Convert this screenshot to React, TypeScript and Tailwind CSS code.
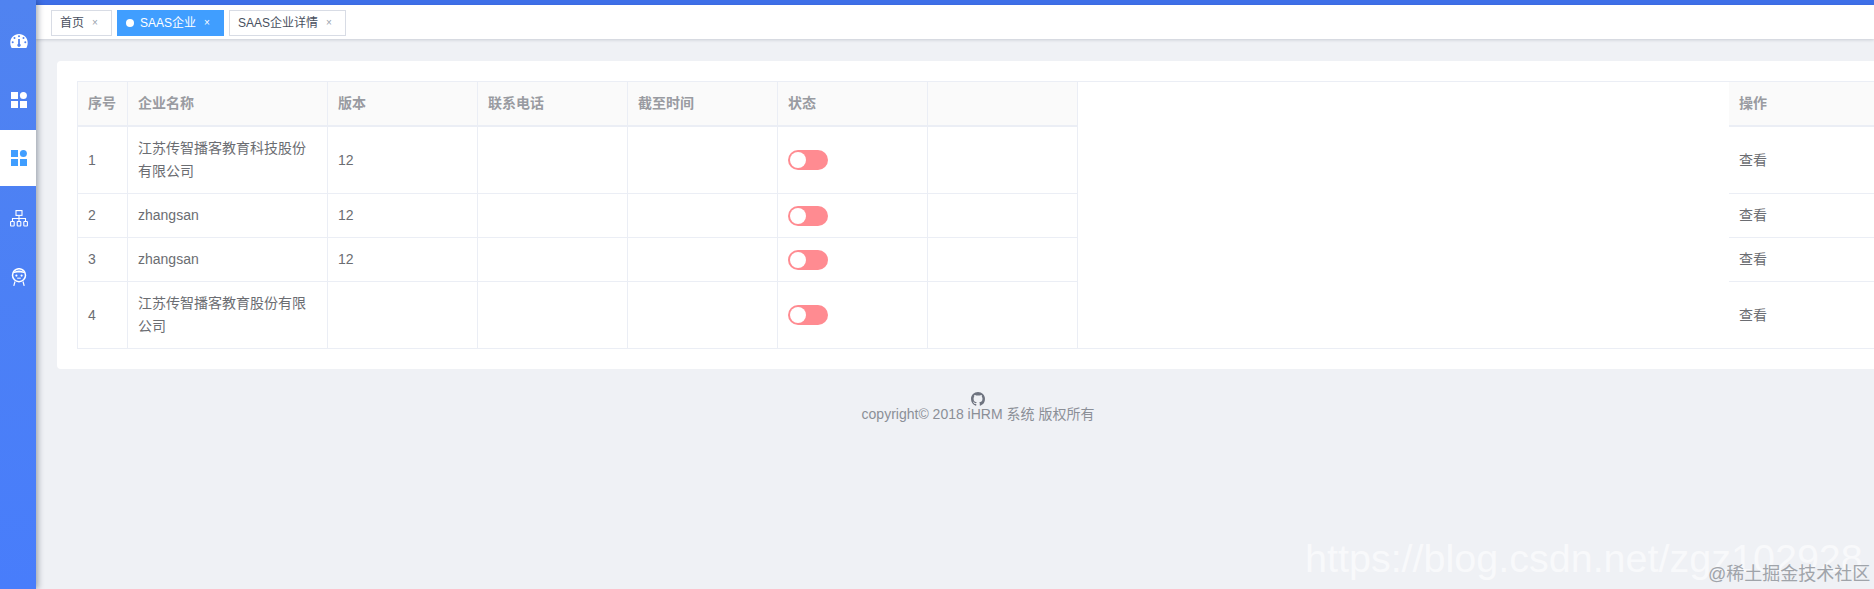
import React from 'react';

const cjk = { fontFamily: '"Liberation Sans", "Noto Sans CJK SC", sans-serif' };

const GaugeIcon = () => (
  <svg width="18" height="16" viewBox="0 0 18 15">
    <path
      fillRule="evenodd"
      fill="currentColor"
      d="M9 0.5C4.2 0.5 0.3 4.4 0.3 9.2c0 2 .5 3.700 1.300 5.300h14.800c.8-1.600 1.300-3.300 1.300-5.300C17.700 4.400 13.800 .5 9 .5zM9 1.800a1 1 0 1 1 0 2a1 1 0 1 1 0-2zM4.500 3.600a1 1 0 1 1 0 2a1 1 0 1 1 0-2zM13.500 3.600a1 1 0 1 1 0 2a1 1 0 1 1 0-2zM2.700 7.800a1 1 0 1 1 0 2a1 1 0 1 1 0-2zM15.300 7.800a1 1 0 1 1 0 2a1 1 0 1 1 0-2zM9.900 5.500L9.900 10.200a1.700 1.700 0 1 1-1.800 0L8.100 5.500z"
    />
  </svg>
);

const GridIcon = () => (
  <svg width="16" height="16" viewBox="0 0 16 16" fill="currentColor">
    <rect x="0" y="0" width="7" height="7" />
    <circle cx="12.400" cy="3.500" r="3.500" />
    <rect x="0" y="9" width="7" height="7" />
    <rect x="9" y="9" width="7" height="7" />
  </svg>
);

const TreeIcon = () => (
  <svg width="18" height="17" viewBox="0 0 18 17" fill="none" stroke="currentColor" strokeWidth="1.100">
    <rect x="6" y="0.600" width="6" height="4.800" />
    <path d="M9 5.400V8.500M2.500 11.500V8.500H15.500V11.500M9 8.500V11.500" />
    <rect x="0.600" y="11.500" width="3.600" height="4.500" rx="0.600" />
    <rect x="7.200" y="11.500" width="3.600" height="4.500" rx="0.600" />
    <rect x="13.800" y="11.500" width="3.600" height="4.500" rx="0.600" />
  </svg>
);

const RobotIcon = () => (
  <svg width="16" height="18" viewBox="0 0 16 18" fill="none" stroke="currentColor">
    <circle cx="8" cy="7.200" r="6.500" strokeWidth="1.500" />
    <path d="M2 5.500C3.500 1.500 12.500 1.500 14 5.500C11 4.300 5 4.300 2 5.500Z" fill="currentColor" stroke="none" />
    <circle cx="5.400" cy="7.600" r="1.100" fill="currentColor" stroke="none" />
    <circle cx="10.600" cy="7.600" r="1.100" fill="currentColor" stroke="none" />
    <path d="M6.200 10.200H9.800" strokeWidth="1" />
    <path d="M4 13.500L2.800 17.800M12 13.500L13.200 17.800" strokeWidth="1.200" />
  </svg>
);

const GithubIcon = () => (
  <svg width="14" height="14" viewBox="0 0 16 16" fill="currentColor">
    <path d="M8 0C3.580 0 0 3.580 0 8c0 3.540 2.290 6.530 5.470 7.590.4.070.55-.17.550-.38 0-.19-.01-.82-.01-1.490-2.010.37-2.530-.49-2.690-.94-.09-.23-.48-.94-.82-1.130-.28-.15-.68-.52-.01-.53.630-.01 1.080.58 1.230.82.720 1.210 1.870.87 2.330.66.070-.52.280-.87.510-1.070-1.780-.2-3.640-.89-3.640-3.950 0-.87.310-1.590.820-2.150-.08-.2-.36-1.020.08-2.120 0 0 .67-.21 2.200.82.640-.18 1.320-.27 2-.27s1.360.09 2 .27c1.530-1.040 2.200-.82 2.200-.82.440 1.100.160 1.920.080 2.120.510.560.820 1.270.820 2.150 0 3.070-1.870 3.750-3.650 3.950.290.250.540.730.540 1.480 0 1.070-.01 1.930-.01 2.200 0 .21.150.460.550.380A8.010 8.010 0 0 0 16 8c0-4.420-3.580-8-8-8z" />
  </svg>
);

const menu = [
  { key: 'dash', Icon: GaugeIcon, cls: '' },
  { key: 'apps', Icon: GridIcon, cls: '' },
  { key: 'saas', Icon: GridIcon, cls: 'bg-white text-[#409eff]' },
  { key: 'org', Icon: TreeIcon, cls: 'pt-[4px]' },
  { key: 'user', Icon: RobotIcon, cls: 'pt-[4px]' },
];

const rows = [
  { id: 1, name: '江苏传智播客教育科技股份有限公司', version: '12' },
  { id: 2, name: 'zhangsan', version: '12' },
  { id: 3, name: 'zhangsan', version: '12' },
  { id: 4, name: '江苏传智播客教育股份有限公司', version: '' },
];

const headers = ['序号', '企业名称', '版本', '联系电话', '截至时间', '状态', ''];

const thClass = 'h-[45px] bg-[#fafafa] border-r border-b-2 border-[#ebeef5] pl-[10px] text-left font-bold text-[#999ba1]';
const tdClass = 'border-r border-b border-[#ebeef5] py-[10px] pl-[10px] pr-[10px] align-middle';

const Switch = () => (
  <div className="relative h-[20px] w-[40px] rounded-full bg-[#ff8b91]">
    <div className="absolute left-[2px] top-[2px] h-[16px] w-[16px] rounded-full bg-white" />
  </div>
);

export default function App() {
  return (
    <div className="relative flex h-[589px] w-full overflow-hidden bg-[#eff1f5] text-[14px] leading-[23px] text-[#6b6d72]" style={cjk}>
      <aside className="z-20 flex w-[36px] shrink-0 flex-col bg-gradient-to-b from-[#5083f0] to-[#487dfb] pt-[13px] text-white shadow-[2px_0_6px_rgba(0,21,41,0.35)]">
        {menu.map(({ key, Icon, cls }) => (
          <div key={key} className={`mb-[2.600px] flex h-[56px] items-center justify-center pl-[2px] ${cls}`}>
            <Icon />
          </div>
        ))}
      </aside>

      <main className="flex min-w-0 flex-1 flex-col">
        <div className="h-[5px] shrink-0 bg-[#3e6fe8]" />
        <div className="z-10 flex h-[34px] shrink-0 items-start gap-[5px] bg-white pl-[15px] pt-[5px] text-[12px] leading-[24px] shadow-[0_1px_3px_rgba(0,21,41,0.16)]">
          <div className="flex h-[26px] w-[61px] items-center border border-[#d8dce5] pl-[8px] text-[#495060]">
            <span>首页</span>
            <span className="ml-[8px] text-[10px] text-[#9aa2ad]">×</span>
          </div>
          <div className="flex h-[26px] w-[107px] items-center bg-[#409eff] pl-[9px] text-white">
            <span className="mr-[6px] h-[8px] w-[8px] rounded-full bg-white" />
            <span>SAAS企业</span>
            <span className="ml-[8px] text-[10px]">×</span>
          </div>
          <div className="flex h-[26px] w-[117px] items-center border border-[#d8dce5] pl-[8px] text-[#495060]">
            <span>SAAS企业详情</span>
            <span className="ml-[8px] text-[10px] text-[#9aa2ad]">×</span>
          </div>
        </div>

        <div className="pl-[21px] pt-[22px]">
          <div className="w-[1842px] rounded-[4px] bg-white p-[20px]">
            <table className="w-[1802px] table-fixed border-separate border-spacing-0 border-l border-t border-[#ebeef5]">
              <colgroup>
                <col className="w-[50px]" />
                <col className="w-[200px]" />
                <col className="w-[150px]" />
                <col className="w-[150px]" />
                <col className="w-[150px]" />
                <col className="w-[150px]" />
                <col className="w-[150px]" />
                <col className="w-[651px]" />
                <col className="w-[150px]" />
              </colgroup>
              <thead>
                <tr>
                  {headers.map((h) => (
                    <th key={h} className={thClass}>{h}</th>
                  ))}
                  <th className="border-b-0" />
                  <th className="h-[45px] border-b-2 border-[#ebeef5] bg-[#fafafa] pl-[10px] text-left font-bold text-[#999ba1]">操作</th>
                </tr>
              </thead>
              <tbody>
                {rows.map((row, i) => (
                  <tr key={row.id}>
                    <td className={tdClass}>{row.id}</td>
                    <td className={tdClass}>{row.name}</td>
                    <td className={tdClass}>{row.version}</td>
                    <td className={tdClass} />
                    <td className={tdClass} />
                    <td className={tdClass}><Switch /></td>
                    <td className={tdClass} />
                    <td className={i === rows.length - 1 ? 'border-b border-[#ebeef5]' : ''} />
                    <td className="border-b border-[#ebeef5] py-[10px] pl-[10px] align-middle">查看</td>
                  </tr>
                ))}
              </tbody>
            </table>
          </div>

          <footer className="flex w-[1842px] flex-col items-center pt-[23px] text-[14px] leading-[16px] text-[#8b8f97]">
            <span className="text-[#6f7480]"><GithubIcon /></span>
            <span>copyright© 2018 iHRM 系统 版权所有</span>
          </footer>
        </div>
      </main>

      <div className="pointer-events-none absolute left-[1305px] top-[534px] z-30 whitespace-nowrap text-[39.500px] leading-[48px] text-white opacity-60">
        https://blog.csdn.net/zgz102928
      </div>
      <div className="pointer-events-none absolute left-[1708px] top-[562px] z-30 whitespace-nowrap text-[18px] leading-[24px] text-[#a0a4aa]">
        @稀土掘金技术社区
      </div>
    </div>
  );
}
